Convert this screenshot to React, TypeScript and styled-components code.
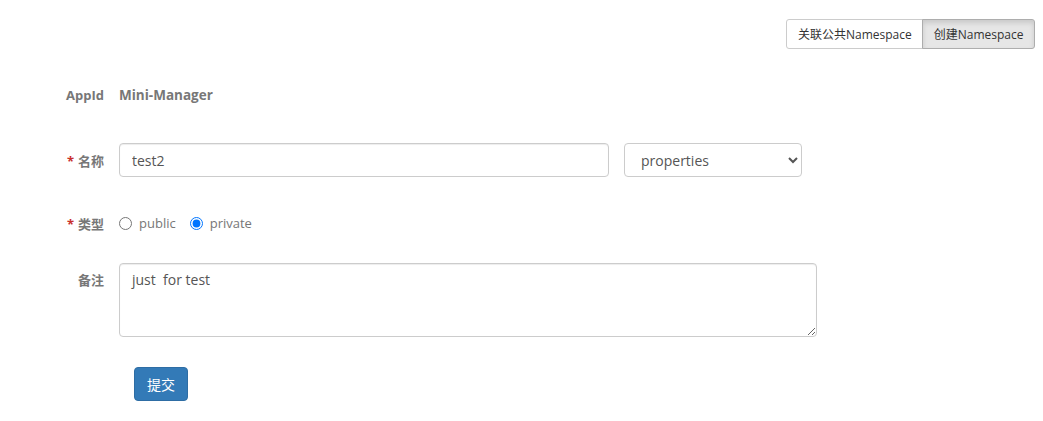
import React from "react";
import styled, { createGlobalStyle } from "styled-components";

const Global = createGlobalStyle`
  html, body { margin: 0; padding: 0; background: #fff; }
  body {
    font-family: "Open Sans", "Noto Sans", "Noto Sans CJK SC", sans-serif;
    font-size: 14px;
    color: #333;
  }
  * { box-sizing: border-box; }
`;

const Page = styled.div`
  width: 1043px;
  height: 421px;
  display: flex;
  flex-direction: column;
`;

const Toolbar = styled.div`
  display: flex;
  justify-content: flex-end;
  padding: 19px 8px 0 0;
`;

const BtnGroup = styled.div`
  display: flex;
`;

const GroupButton = styled.button<{ $active?: boolean; $first?: boolean }>`
  height: 30px;
  padding: 0 10.5px;
  font-family: "Open Sans", "Noto Sans", "Noto Sans CJK SC", sans-serif;
  font-size: 12px;
  color: #333;
  background: ${(p) => (p.$active ? "#e6e6e6" : "#fff")};
  border: 1px solid ${(p) => (p.$active ? "#adadad" : "#ccc")};
  border-radius: ${(p) => (p.$first ? "3px 0 0 3px" : "0 3px 3px 0")};
  margin-left: ${(p) => (p.$first ? "0" : "-1px")};
  box-shadow: ${(p) => (p.$active ? "inset 0 3px 5px rgba(0,0,0,.125)" : "none")};
  cursor: pointer;
`;

const Form = styled.div`
  display: flex;
  flex-direction: column;
`;

const Row = styled.div<{ $mt: number; $top?: boolean }>`
  display: flex;
  align-items: ${(p) => (p.$top ? "flex-start" : "center")};
  margin-top: ${(p) => p.$mt}px;
  min-height: 34px;
`;

const Label = styled.div<{ $pt?: number }>`
  width: 104px;
  text-align: right;
  padding-top: ${(p) => p.$pt ?? 0}px;
  font-size: 13px;
  font-weight: 700;
  color: #777;
  flex-shrink: 0;
`;

const Req = styled.span`
  color: #c9302c;
  margin-right: 4px;
`;

const Controls = styled.div`
  margin-left: 15px;
  display: flex;
  align-items: center;
`;

const StaticText = styled.div`
  font-size: 13.5px;
  font-weight: 700;
  color: #777;
`;

const TextInput = styled.input`
  width: 490px;
  height: 34px;
  padding: 6px 12px;
  font-family: "Open Sans", "Noto Sans", "Noto Sans CJK SC", sans-serif;
  font-size: 14px;
  color: #555;
  border: 1px solid #ccc;
  border-radius: 4px;
  box-shadow: inset 0 1px 1px rgba(0,0,0,.075);
  outline: none;
`;

const Select = styled.select`
  width: 178px;
  height: 34px;
  margin-left: 15px;
  padding: 6px 12px;
  font-family: "Open Sans", "Noto Sans", "Noto Sans CJK SC", sans-serif;
  font-size: 14px;
  color: #555;
  background: #fff;
  border: 1px solid #ccc;
  border-radius: 4px;
  outline: none;
`;

const RadioLabel = styled.label`
  display: inline-flex;
  align-items: center;
  margin-right: 14px;
  font-size: 13px;
  color: #777;
  input {
    margin: 0 7px 0 0;
    width: 13px;
    height: 13px;
  }
`;

const TextArea = styled.textarea`
  width: 698px;
  height: 74px;
  padding: 6px 12px;
  font-family: "Open Sans", "Noto Sans", "Noto Sans CJK SC", sans-serif;
  font-size: 14px;
  color: #555;
  border: 1px solid #ccc;
  border-radius: 4px;
  box-shadow: inset 0 1px 1px rgba(0,0,0,.075);
  outline: none;
  resize: both;
`;

const SubmitRow = styled.div`
  margin-top: 30px;
  padding-left: 134px;
  display: flex;
`;

const PrimaryButton = styled.button`
  height: 34px;
  padding: 0 12px;
  font-family: "Open Sans", "Noto Sans", "Noto Sans CJK SC", sans-serif;
  font-size: 14px;
  color: #fff;
  background: #337ab7;
  border: 1px solid #2e6da4;
  border-radius: 4px;
  cursor: pointer;
`;

export default function App() {
  return (
    <Page>
      <Global />
      <Toolbar>
        <BtnGroup>
          <GroupButton $first>关联公共Namespace</GroupButton>
          <GroupButton $active>创建Namespace</GroupButton>
        </BtnGroup>
      </Toolbar>
      <Form>
        <Row $mt={29}>
          <Label>AppId</Label>
          <Controls>
            <StaticText>Mini-Manager</StaticText>
          </Controls>
        </Row>
        <Row $mt={31}>
          <Label>
            <Req>*</Req>名称
          </Label>
          <Controls>
            <TextInput defaultValue="test2" />
            <Select defaultValue="properties">
              <option value="properties">properties</option>
              <option value="xml">xml</option>
              <option value="json">json</option>
              <option value="yml">yml</option>
              <option value="yaml">yaml</option>
            </Select>
          </Controls>
        </Row>
        <Row $mt={29}>
          <Label>
            <Req>*</Req>类型
          </Label>
          <Controls>
            <RadioLabel>
              <input type="radio" name="type" />
              public
            </RadioLabel>
            <RadioLabel>
              <input type="radio" name="type" defaultChecked />
              private
            </RadioLabel>
          </Controls>
        </Row>
        <Row $mt={23} $top>
          <Label $pt={7}>备注</Label>
          <Controls>
            <TextArea defaultValue="just  for test" />
          </Controls>
        </Row>
        <SubmitRow>
          <PrimaryButton>提交</PrimaryButton>
        </SubmitRow>
      </Form>
    </Page>
  );
}
